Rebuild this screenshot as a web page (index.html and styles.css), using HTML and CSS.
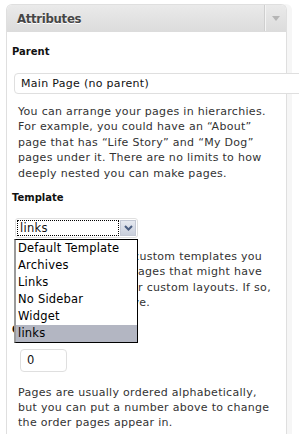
FILE: index.html
```html
<!DOCTYPE html>
<html>
<head>
<meta charset="utf-8">
<link rel="stylesheet" href="styles.css">
</head>
<body>
<div class="page">
  <div class="postbox">
    <h3 class="hndle">
      <span class="title">Attributes</span>
      <span class="toggle"><span class="arrow"></span></span>
    </h3>
    <div class="inside">
      <h5 class="label label-first">Parent</h5>
      <div class="select select-wide">Main Page (no parent)</div>
      <p class="desc desc-first">You can arrange your pages in hierarchies. For example, you could have an “About” page that has “Life Story” and “My Dog” pages under it. There are no limits to how deeply nested you can make pages.</p>

      <h5 class="label label-tpl">Template</h5>
      <div class="tpl-wrap">
        <div class="select select-small">
          <span class="focus">links</span>
          <span class="btn">
            <svg width="9" height="6" viewBox="0 0 9 6"><path d="M1 1 L4.5 4.5 L8 1" fill="none" stroke="#4a5d80" stroke-width="2"/></svg>
          </span>
        </div>
        <ul class="dropdown">
          <li>Default Template</li>
          <li>Archives</li>
          <li>Links</li>
          <li>No Sidebar</li>
          <li>Widget</li>
          <li class="selected">links</li>
        </ul>
      </div>
      <p class="desc desc-tpl">Some themes have custom templates you can use for certain pages that might have additional features or custom layouts. If so, you’ll see them above.</p>

      <h5 class="label label-order">Order</h5>
      <div class="input">0</div>
      <p class="desc desc-order">Pages are usually ordered alphabetically, but you can put a number above to change the order pages appear in.</p>
    </div>
  </div>
</div>
</body>
</html>
```

FILE: styles.css
```css
html, body {
  margin: 0;
  padding: 0;
  background: #ffffff;
  overflow: hidden;
}

body {
  font-family: "DejaVu Sans", Verdana, sans-serif;
  color: #333333;
  width: 299px;
  height: 434px;
}

.page {
  width: 299px;
  height: 434px;
  overflow: hidden;
  box-sizing: border-box;
  padding-top: 4px;
  padding-left: 6px;
}

.postbox {
  width: 279px;
  height: 460px;
  border: 1px solid #dfdfdf;
  border-bottom: none;
  border-radius: 6px 6px 0 0;
  box-shadow: 5px 0 0 #f6f6f6;
  background: #ffffff;
}

.hndle {
  margin: 0;
  height: 26px;
  display: flex;
  align-items: stretch;
  border-radius: 5px 5px 0 0;
  background: linear-gradient(#eaeaea, #dcdcdc);
  border-bottom: 1px solid #dcdcdc;
}

.title {
  flex: 1;
  padding-left: 10px;
  font-family: "DejaVu Sans Condensed", "DejaVu Sans", sans-serif;
  font-size: 13px;
  font-weight: bold;
  letter-spacing: -0.3px;
  line-height: 27px;
  color: #464646;
  text-shadow: 0 1px 0 #ffffff;
}

.toggle {
  width: 22px;
  border-left: 1px solid #cfcfcf;
  box-shadow: inset 1px 0 0 #f4f4f4;
  display: flex;
  justify-content: center;
  padding-top: 11px;
  box-sizing: border-box;
}

.arrow {
  width: 0;
  height: 0;
  border-left: 4px solid transparent;
  border-right: 4px solid transparent;
  border-top: 5px solid #b5b5b5;
}

.inside {
  padding-left: 5px;
  position: relative;
}

.label {
  margin: 13px 0 0 0;
  font-size: 10px;
  font-weight: bold;
  line-height: 15px;
  color: #111111;
}

.label-first {
  margin-top: 12px;
}

.label-tpl {
  margin-top: 9px;
}

.select {
  box-sizing: border-box;
  border: 1px solid #dfdfdf;
  border-radius: 4px;
  background: #ffffff;
  font-size: 11px;
  letter-spacing: 0.3px;
  color: #111111;
}

.select-wide {
  margin: 14px 0 0 2px;
  width: 300px;
  height: 21px;
  line-height: 19px;
  padding-left: 6px;
}

.desc {
  margin: 0 0 0 6px;
  width: 256px;
  font-size: 11px;
  letter-spacing: 0.3px;
  line-height: 15.4px;
  color: #333333;
}

.desc-first {
  margin-top: 10px;
}

.tpl-wrap {
  position: relative;
  margin: 13px 0 0 3px;
  width: 123px;
}

.select-small {
  width: 123px;
  height: 20px;
  display: flex;
  padding: 1px;
  border-radius: 3px;
}

.focus {
  flex: 1;
  box-sizing: border-box;
  border: 1px dotted #000000;
  font-size: 11.5px;
  line-height: 15px;
  padding-left: 2px;
  color: #111111;
}

.btn {
  width: 16px;
  box-sizing: border-box;
  margin-left: 1px;
  border: 1px solid #c3c8d4;
  background: linear-gradient(#e6e9f0, #c9cfdc);
  display: flex;
  align-items: center;
  justify-content: center;
}

.dropdown {
  position: absolute;
  top: 21px;
  left: -1px;
  width: 124px;
  box-sizing: border-box;
  margin: 0;
  padding: 0;
  list-style: none;
  background: #ffffff;
  border: 1px solid #000000;
  border-left: 2px solid #9a9a9a;
  z-index: 2;
}

.dropdown li {
  height: 17px;
  line-height: 17px;
  font-size: 11.5px;
  letter-spacing: 0.2px;
  color: #000000;
  padding-left: 2px;
}

.dropdown li.selected {
  background: #b3b6c2;
}

.desc-tpl {
  margin-top: 11px;
}

.label-order {
  margin-top: 11px;
}

.input {
  box-sizing: border-box;
  margin: 12px 0 0 8px;
  width: 47px;
  height: 23px;
  border: 1px solid #dfdfdf;
  border-radius: 4px;
  font-size: 11.5px;
  line-height: 21px;
  padding-left: 6px;
  color: #111111;
}

.desc-order {
  margin-top: 13px;
}
```
